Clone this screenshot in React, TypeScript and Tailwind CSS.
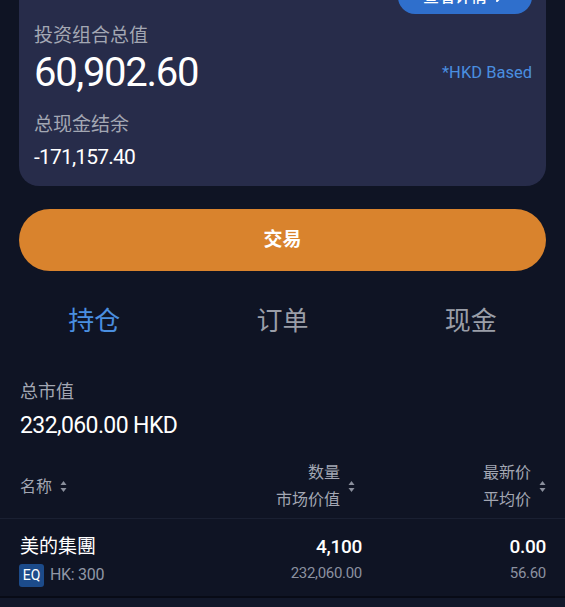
import { ChevronRight } from "lucide-react";

const font = { fontFamily: "Roboto, 'Noto Sans CJK SC', sans-serif" };

function SortIcon() {
  return (
    <svg width="7" height="13" viewBox="0 0 7 13" className="shrink-0">
      <path d="M3.5 1 L6.5 5 L0.5 5 Z" fill="#8a8f9c" />
      <path d="M3.5 12 L6.5 8 L0.5 8 Z" fill="#8a8f9c" />
    </svg>
  );
}

export default function App() {
  const tabs = ["持仓", "订单", "现金"];

  return (
    <main
      className="w-[565px] h-[607px] overflow-hidden bg-[#0f1424] text-white"
      style={font}
    >
      <div className="mx-[19px] -mt-[40px] pt-[20px] pb-[14px] px-[15px] rounded-[20px] bg-[#272c4a]">
        <div className="flex justify-end -mr-[1px]">
          <button className="h-[34px] w-[134px] rounded-full bg-[#2f6fcc] text-white text-[16px] font-medium flex items-center justify-center gap-1">
            查看详情 <ChevronRight size={16} strokeWidth={3} />
          </button>
        </div>
        <div className="mt-2 text-[19px] leading-[27px] text-[#a3a7b3]">投资组合总值</div>
        <div className="flex items-center justify-between">
          <div className="text-[40px] leading-[48px] tracking-[-1.3px]">60,902.60</div>
          <div className="text-[16.5px] text-[#4a8fe0] mr-[-1px]">*HKD Based</div>
        </div>
        <div className="mt-[14px] text-[19px] leading-[27px] text-[#a3a7b3]">总现金结余</div>
        <div className="mt-[4px] text-[21px] leading-[30px] tracking-[-0.8px]">-171,157.40</div>
      </div>

      <div className="px-[19px] mt-[23px]">
        <button className="w-full h-[62px] rounded-full bg-[#d9832d] text-white text-[19px] font-bold">
          交易
        </button>
      </div>

      <div className="grid grid-cols-3 mt-[30px]">
        {tabs.map((t, i) => (
          <div
            key={t}
            className={
              "text-center text-[26px] leading-[40px] " +
              (i === 0 ? "text-[#4a8fe0]" : "text-[#9a9ea8]")
            }
          >
            {t}
          </div>
        ))}
      </div>

      <div className="px-[20px] mt-[38px]">
        <div className="text-[18px] leading-[26px] text-[#a3a7b3]">总市值</div>
        <div className="mt-[5px] text-[23px] leading-[32px] tracking-[-0.6px]">232,060.00 HKD</div>
      </div>

      <div className="mt-[17px] px-[19px] pb-[5px] border-b border-[#1a2032] flex items-center text-[16px] leading-[27px] text-[#a3a7b3]">
        <div className="flex-1 flex items-center gap-[8px] pl-[1px]">
          名称 <SortIcon />
        </div>
        <div className="w-[170px] flex items-center justify-end gap-[8px] pr-[7px]">
          <div className="text-right">
            <div>数量</div>
            <div>市场价值</div>
          </div>
          <SortIcon />
        </div>
        <div className="w-[184px] flex items-center justify-end gap-[8px]">
          <div className="text-right">
            <div>最新价</div>
            <div>平均价</div>
          </div>
          <SortIcon />
        </div>
      </div>

      <div className="px-[19px] pt-[14px] pb-[9px] border-b-2 border-[#080b16] flex items-start">
        <div className="flex-1">
          <div className="pl-[1px] text-[19px] leading-[27px]">美的集團</div>
          <div className="mt-[3px] flex items-center gap-[6px]">
            <span className="w-[25px] h-[23px] rounded-[3px] bg-[#1c4b8a] text-[14px] flex items-center justify-center">
              EQ
            </span>
            <span className="text-[16px] tracking-[-0.3px] text-[#9097a6]">HK: 300</span>
          </div>
        </div>
        <div className="w-[170px] text-right">
          <div className="text-[19px] leading-[27px] font-medium tracking-[-0.3px]">4,100</div>
          <div className="mt-[1px] text-[15px] leading-[25px] tracking-[-0.3px] text-[#8b91a0]">232,060.00</div>
        </div>
        <div className="w-[184px] text-right">
          <div className="text-[19px] leading-[27px] font-medium tracking-[-0.3px]">0.00</div>
          <div className="mt-[1px] text-[15px] leading-[25px] tracking-[-0.3px] text-[#8b91a0]">56.60</div>
        </div>
      </div>
      <div className="h-[20px] bg-[#12182a]" />
    </main>
  );
}
